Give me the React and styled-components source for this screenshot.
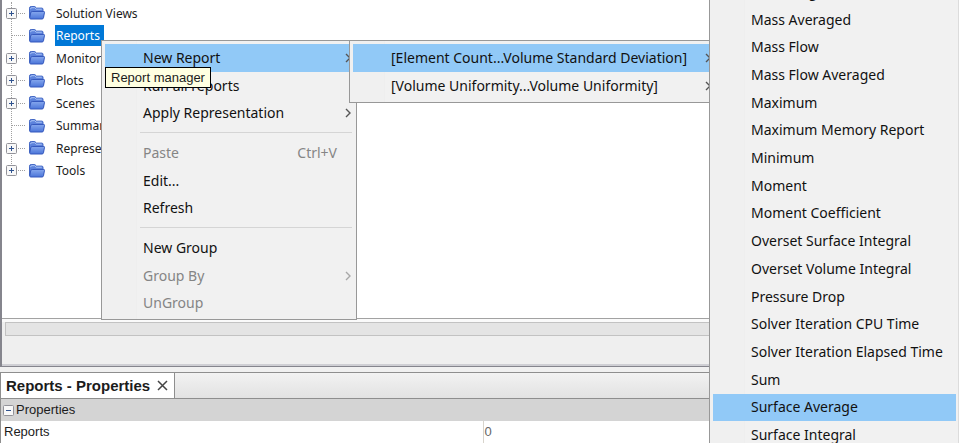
import React from 'react'
import styled, { createGlobalStyle } from 'styled-components'

const GlobalStyle = createGlobalStyle`
  * {
    box-sizing: border-box;
  }

  html,
  body {
    margin: 0;
    overflow: hidden;
    background: #f0f0f0;
  }

  button {
    margin: 0;
    border: 0;
    padding: 0;
    background: none;
    color: inherit;
    font: inherit;
    text-align: left;
  }
`

const treeNodes = [
  { label: 'Solution Views', expandable: true },
  { label: 'Reports', selected: true },
  { label: 'Monitors', expandable: true },
  { label: 'Plots', expandable: true },
  { label: 'Scenes', expandable: true },
  { label: 'Summaries' },
  { label: 'Representations', expandable: true },
  { label: 'Tools', expandable: true },
]

const contextItems = [
  { label: 'New Report', submenu: true, active: true },
  { label: 'Run all reports' },
  { label: 'Apply Representation', submenu: true },
  { separator: true },
  { label: 'Paste', shortcut: 'Ctrl+V', disabled: true },
  { label: 'Edit...' },
  { label: 'Refresh' },
  { separator: true },
  { label: 'New Group' },
  { label: 'Group By', submenu: true, disabled: true },
  { label: 'UnGroup', disabled: true },
]

const rangeItems = [
  { label: '[Element Count...Volume Standard Deviation]', submenu: true, active: true },
  { label: '[Volume Uniformity...Volume Uniformity]', submenu: true },
]

const reportItems = [
  { label: 'Line Integral' },
  { label: 'Mass Averaged' },
  { label: 'Mass Flow' },
  { label: 'Mass Flow Averaged' },
  { label: 'Maximum' },
  { label: 'Maximum Memory Report' },
  { label: 'Minimum' },
  { label: 'Moment' },
  { label: 'Moment Coefficient' },
  { label: 'Overset Surface Integral' },
  { label: 'Overset Volume Integral' },
  { label: 'Pressure Drop' },
  { label: 'Solver Iteration CPU Time' },
  { label: 'Solver Iteration Elapsed Time' },
  { label: 'Sum' },
  { label: 'Surface Average', active: true },
  { label: 'Surface Integral' },
]

const Window = styled.main`
  position: relative;
  display: flex;
  flex-direction: column;
  min-height: 100vh;
  overflow: hidden;
  color: #1c1c1c;
  font-family: 'Liberation Sans', Arial, sans-serif;
  font-size: 13px;
`

const TreePane = styled.section`
  display: flex;
  flex-direction: column;
  height: 367px;
  border-left: 2px solid #85858d;
  border-bottom: 1px solid #85858d;
  background: #fff;
`

const TreeView = styled.div`
  flex: 1;
  padding-top: 2px;
  border-bottom: 1px solid #a2a2a2;
`

const Tree = styled.ul`
  position: relative;
  display: flex;
  flex-direction: column;
  height: 180px;
  margin: 0;
  padding: 0;
  list-style: none;
  font-family: 'Noto Sans', Tahoma, sans-serif;
  font-size: 12px;

  &::before {
    content: '';
    position: absolute;
    top: 0;
    bottom: 12px;
    left: 9px;
    border-left: 1px dotted #a0a0a0;
  }
`

const TreeItem = styled.li`
  flex: 1;
  display: flex;
  align-items: center;
  padding-left: 4px;
`

const Branch = styled.span`
  position: relative;
  flex: none;
  display: flex;
  align-items: center;
  width: 22px;
  height: 11px;

  &::after {
    content: '';
    flex: 1;
    margin: 0 3px 0 ${({ $leaf }) => ($leaf ? '6px' : '1px')};
    border-top: 1px dotted #a0a0a0;
  }
`

const Expander = styled.button`
  display: flex;
  width: 11px;
  height: 11px;
`

const TreeLabel = styled.span`
  margin-left: 9px;
  padding: 0 4px 0 1px;
  line-height: 21px;
  white-space: nowrap;
  background: ${({ $selected }) => ($selected ? '#0078d7' : 'transparent')};
  color: ${({ $selected }) => ($selected ? '#fff' : 'inherit')};
`

const ScrollArea = styled.div`
  height: 47px;
  padding: 3px 0 0 3px;
  border-bottom: 2px solid #cfcfd4;
  background: #efefef;
  box-shadow: inset 0 3px #fafafa;
`

const ScrollTrack = styled.div`
  height: 14px;
  border: 1px solid #c2c2c2;
  background: #e4e4e4;
`

const PropertiesPane = styled.section`
  flex: 1;
  display: flex;
  flex-direction: column;
  margin-top: 5px;
  border-top: 1px solid #8e8e8e;
  border-left: 1px solid #8e8e8e;
  background: #fff;
`

const TabBar = styled.header`
  display: flex;
  height: 26px;
  border-bottom: 1px solid #8e8e8e;
  background: linear-gradient(#f2f2f2, #e2e2e2);
`

const Tab = styled.div`
  display: flex;
  align-items: center;
  gap: 7px;
  padding: 0 6px 0 5px;
  border-right: 1px solid #8e8e8e;
  background: #fff;
`

const TabTitle = styled.h1`
  margin: 0;
  font-size: 15px;
  line-height: 24px;
`

const TabClose = styled.button`
  display: flex;
`

const PropertyTable = styled.table`
  width: 100%;
  border-collapse: collapse;
  table-layout: fixed;
  line-height: 22px;

  th,
  td {
    padding: 0 0 0 3px;
    font-weight: normal;
    text-align: left;
  }

  thead th {
    padding-left: 2px;
    background: #d4d4d4;
  }

  tbody tr {
    border-bottom: 1px solid #d0d0d0;
  }

  tbody td {
    padding-left: 1px;
    border-left: 1px solid #d8d4cc;
    color: #666;
  }
`

const NameColumn = styled.col`
  width: 482px;
`

const GroupTitle = styled.span`
  display: flex;
  align-items: center;
  gap: 2px;
`

const Menu = styled.div`
  position: absolute;
  display: flex;
  flex-direction: column;
  padding: 3px 2px 2px 3px;
  border: 1px solid #989898;
  background: linear-gradient(90deg, #f0f0f0 34px, #eeeeee 34px, #eeeeee 35px, #f1f1f1 35px);
  color: #111;
  font-family: 'Noto Sans', 'Segoe UI', sans-serif;
  font-size: 14px;
`

const ContextMenu = styled(Menu)`
  top: 40px;
  left: 101px;
  width: 256px;
  height: 280px;
`

const RangeMenu = styled(Menu)`
  top: 40px;
  left: 349px;
  width: 380px;
  height: 63px;
`

const ReportMenu = styled(Menu)`
  top: -26px;
  bottom: -8px;
  left: 709px;
  width: 250px;
  border-right-color: #dcdcdc;
`

const MenuItem = styled.button`
  flex: 1;
  display: flex;
  align-items: center;
  min-height: 0;
  padding: 0 ${({ $inset }) => $inset}px 0 38px;
  line-height: 20px;
  white-space: nowrap;
  background: ${({ $active }) => ($active ? '#91c9f7' : 'transparent')};

  &:disabled {
    color: #858585;
  }
`

const MenuLabel = styled.span`
  flex: 1;
`

const Shortcut = styled.span`
  margin-right: 14px;
`

const Separator = styled.hr`
  flex: none;
  width: auto;
  height: 1px;
  margin: 5px 2px 6px 35px;
  border: 0;
  background: #d5d5d5;
`

const Tooltip = styled.div`
  position: absolute;
  top: 67px;
  left: 105px;
  padding: 0 5px;
  border: 1px solid #000;
  background: #ffffe1;
  font-size: 13px;
  line-height: 19px;
  white-space: nowrap;
`

const FolderSvg = styled.svg`
  flex: none;
`

const FolderIcon = () => (
  <FolderSvg width="18" height="14" viewBox="0 0 18 14" aria-hidden="true">
    <defs>
      <linearGradient id="folderFront" x1="0" y1="0" x2="0" y2="1">
        <stop offset="0" stopColor="#86a8ee" />
        <stop offset="1" stopColor="#4a74d8" />
      </linearGradient>
    </defs>
    <path d="M1.5 11.5V2.2q0-1.7 1.7-1.7h3.6l1.7 1.6h5.3q1.2 0 1.2 1.2v8.2z" fill="#5d83dc" stroke="#4468c4" />
    <path d="M2.5 3.2q0-1.5 1.5-1.5h2.6l1.6 1.5h5.6" fill="none" stroke="#a9c3f5" />
    <path d="M4.2 5.5h11.6q.8 0 .7.8l-1 5.4q-.2 1.3-1.5 1.3H2.8q-1.2 0-1-1.2l.9-5q.2-1.3 1.5-1.3z" fill="url(#folderFront)" stroke="#3558bd" />
  </FolderSvg>
)

const BoxIcon = ({ plus }) => (
  <svg width="11" height="11" viewBox="0 0 11 11" aria-hidden="true">
    <rect x="0.5" y="0.5" width="10" height="10" rx="1" fill="#f8f8f8" stroke="#929299" />
    <path d={plus ? 'M3 5.5h5M5.5 3v5' : 'M3 5.5h5'} stroke="#30538f" />
  </svg>
)

const Chevron = ({ muted }) => (
  <svg
    width="6"
    height="10"
    viewBox="0 0 6 10"
    fill="none"
    stroke={muted ? '#a8a8a8' : '#555'}
    strokeWidth="1.4"
    aria-hidden="true"
  >
    <path d="M1 1l4 4-4 4" />
  </svg>
)

const CloseIcon = () => (
  <svg width="11" height="11" viewBox="0 0 11 11" stroke="#444" strokeWidth="1.5" aria-hidden="true">
    <path d="M1 1l9 9M10 1l-9 9" />
  </svg>
)

const MenuItems = ({ items, inset = 3 }) =>
  items.map((item, index) =>
    item.separator ? (
      <Separator key={index} />
    ) : (
      <MenuItem
        key={item.label}
        type="button"
        role="menuitem"
        $active={item.active}
        $inset={inset}
        disabled={item.disabled}
      >
        <MenuLabel>{item.label}</MenuLabel>
        {item.shortcut && <Shortcut>{item.shortcut}</Shortcut>}
        {item.submenu && <Chevron muted={item.disabled} />}
      </MenuItem>
    )
  )

const App = () => (
  <>
    <GlobalStyle />
    <Window>
      <TreePane>
        <TreeView>
          <Tree>
            {treeNodes.map(({ label, expandable, selected }) => (
              <TreeItem key={label}>
                <Branch $leaf={!expandable}>
                  {expandable && (
                    <Expander type="button" aria-label={`Expand ${label}`}>
                      <BoxIcon plus />
                    </Expander>
                  )}
                </Branch>
                <FolderIcon />
                <TreeLabel $selected={selected}>{label}</TreeLabel>
              </TreeItem>
            ))}
          </Tree>
        </TreeView>
        <ScrollArea>
          <ScrollTrack />
        </ScrollArea>
      </TreePane>

      <PropertiesPane>
        <TabBar>
          <Tab>
            <TabTitle>Reports - Properties</TabTitle>
            <TabClose type="button" aria-label="Close">
              <CloseIcon />
            </TabClose>
          </Tab>
        </TabBar>
        <PropertyTable>
          <colgroup>
            <NameColumn />
            <col />
          </colgroup>
          <thead>
            <tr>
              <th colSpan="2">
                <GroupTitle>
                  <BoxIcon />
                  Properties
                </GroupTitle>
              </th>
            </tr>
          </thead>
          <tbody>
            <tr>
              <th scope="row">Reports</th>
              <td>0</td>
            </tr>
          </tbody>
        </PropertyTable>
      </PropertiesPane>

      <ContextMenu role="menu">
        <MenuItems items={contextItems} />
      </ContextMenu>
      <RangeMenu role="menu">
        <MenuItems items={rangeItems} inset={15} />
      </RangeMenu>
      <ReportMenu role="menu">
        <MenuItems items={reportItems} />
      </ReportMenu>
      <Tooltip role="tooltip">Report manager</Tooltip>
    </Window>
  </>
)

export default App
